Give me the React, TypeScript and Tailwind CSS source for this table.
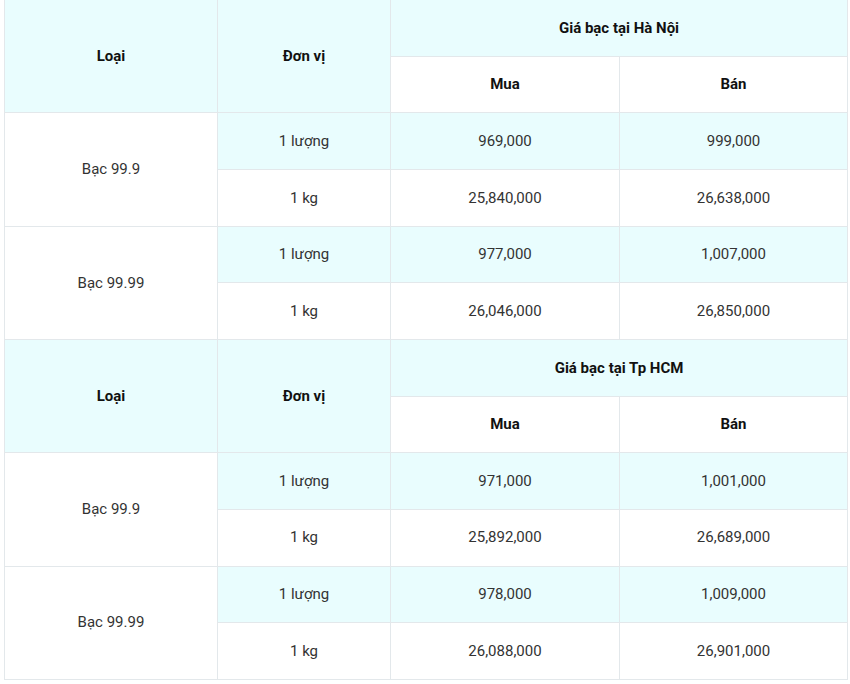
import * as React from "react"

type Row = { unit: string; buy: string; sell: string }
type Group = { name: string; rows: Row[] }

const tables: { city: string; groups: Group[] }[] = [
  {
    city: "Giá bạc tại Hà Nội",
    groups: [
      {
        name: "Bạc 99.9",
        rows: [
          { unit: "1 lượng", buy: "969,000", sell: "999,000" },
          { unit: "1 kg", buy: "25,840,000", sell: "26,638,000" },
        ],
      },
      {
        name: "Bạc 99.99",
        rows: [
          { unit: "1 lượng", buy: "977,000", sell: "1,007,000" },
          { unit: "1 kg", buy: "26,046,000", sell: "26,850,000" },
        ],
      },
    ],
  },
  {
    city: "Giá bạc tại Tp HCM",
    groups: [
      {
        name: "Bạc 99.9",
        rows: [
          { unit: "1 lượng", buy: "971,000", sell: "1,001,000" },
          { unit: "1 kg", buy: "25,892,000", sell: "26,689,000" },
        ],
      },
      {
        name: "Bạc 99.99",
        rows: [
          { unit: "1 lượng", buy: "978,000", sell: "1,009,000" },
          { unit: "1 kg", buy: "26,088,000", sell: "26,901,000" },
        ],
      },
    ],
  },
]

const cell = "border border-[#e3e8eb] text-center align-middle p-0"
const head = "font-bold text-[#111]"

function PriceTable({ city, groups }: { city: string; groups: Group[] }) {
  return (
    <table className="w-[843px] table-fixed border-collapse text-[15px] text-[#333]">
      <colgroup>
        <col className="w-[213px]" />
        <col className="w-[173px]" />
        <col className="w-[229px]" />
        <col className="w-[228px]" />
      </colgroup>
      <thead>
        <tr className="h-[56.67px]">
          <th rowSpan={2} className={`${cell} ${head} bg-[#e9fdfe]`}>Loại</th>
          <th rowSpan={2} className={`${cell} ${head} bg-[#e9fdfe]`}>Đơn vị</th>
          <th colSpan={2} className={`${cell} ${head} bg-[#e9fdfe]`}>{city}</th>
        </tr>
        <tr className="h-[56.67px]">
          <th className={`${cell} ${head} bg-white`}>Mua</th>
          <th className={`${cell} ${head} bg-white`}>Bán</th>
        </tr>
      </thead>
      <tbody>
        {groups.map((g) =>
          g.rows.map((r, i) => (
            <tr key={g.name + r.unit} className="h-[56.67px]">
              {i === 0 && (
                <td rowSpan={g.rows.length} className={`${cell} bg-white`}>
                  {g.name}
                </td>
              )}
              <td className={`${cell} ${i === 0 ? "bg-[#e9fdfe]" : "bg-white"}`}>{r.unit}</td>
              <td className={`${cell} ${i === 0 ? "bg-[#e9fdfe]" : "bg-white"}`}>{r.buy}</td>
              <td className={`${cell} ${i === 0 ? "bg-[#e9fdfe]" : "bg-white"}`}>{r.sell}</td>
            </tr>
          ))
        )}
      </tbody>
    </table>
  )
}

export default function App() {
  return (
    <div className="w-[850px] h-[684px] bg-white pl-[4px] font-['Roboto',sans-serif] overflow-hidden">
      <div className="-mt-px">
        {tables.map((t, idx) => (
          <div key={t.city} className={idx > 0 ? "-mt-px" : ""}>
            <PriceTable city={t.city} groups={t.groups} />
          </div>
        ))}
      </div>
    </div>
  )
}
